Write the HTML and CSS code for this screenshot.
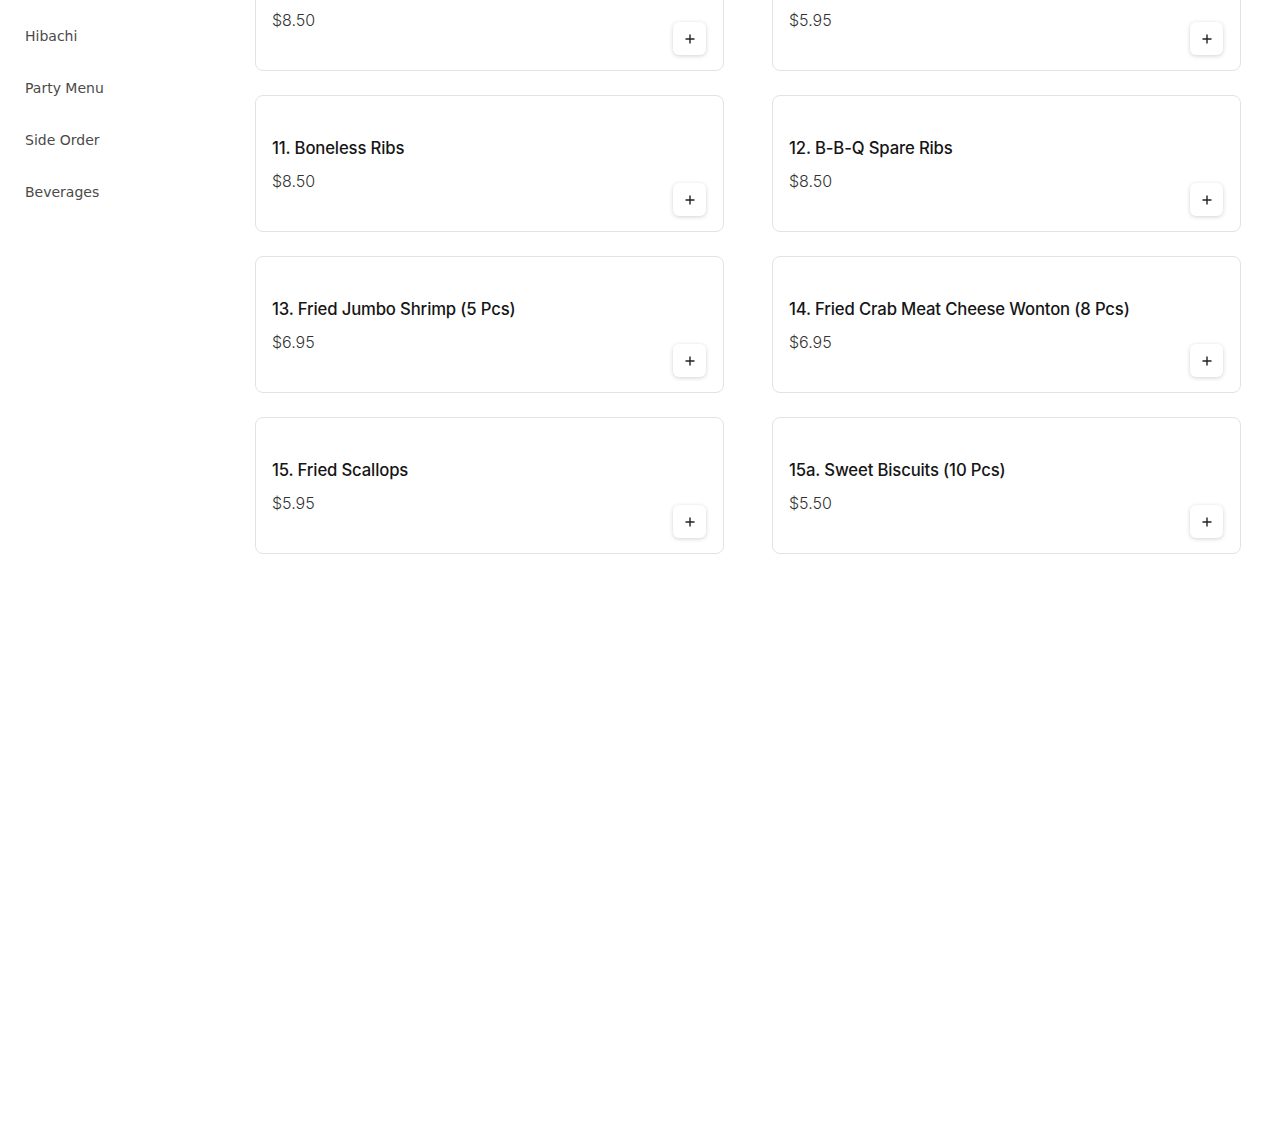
FILE: index.html
```html
<!DOCTYPE html>
<html lang="en">
<head>
  <meta charset="UTF-8" />
  <meta name="viewport" content="width=device-width, initial-scale=1.0" />
  <title>Menu</title>
  <link rel="stylesheet" href="styles.css">
</head>
<body>
  <div class="page">
    <nav class="categories">
      <a class="cat-link" href="#">Hibachi</a>
      <a class="cat-link" href="#">Party Menu</a>
      <a class="cat-link" href="#">Side Order</a>
      <a class="cat-link" href="#">Beverages</a>
    </nav>
    <main class="menu-list">
      <div class="menu-item">
        <div class="item-info">
          <div class="item-name">9. Chicken Wings (6 Pcs)</div>
          <div class="item-price">$8.50</div>
        </div>
        <button class="add-btn"><svg viewBox="0 0 12 12" width="12" height="12"><path d="M6 1.5v9M1.5 6h9" stroke="#222" stroke-width="1.4" fill="none"/></svg></button>
      </div>
      <div class="menu-item">
        <div class="item-info">
          <div class="item-name">10. Chicken Nuggets (10 Pcs)</div>
          <div class="item-price">$5.95</div>
        </div>
        <button class="add-btn"><svg viewBox="0 0 12 12" width="12" height="12"><path d="M6 1.5v9M1.5 6h9" stroke="#222" stroke-width="1.4" fill="none"/></svg></button>
      </div>
      <div class="menu-item">
        <div class="item-info">
          <div class="item-name">11. Boneless Ribs</div>
          <div class="item-price">$8.50</div>
        </div>
        <button class="add-btn"><svg viewBox="0 0 12 12" width="12" height="12"><path d="M6 1.5v9M1.5 6h9" stroke="#222" stroke-width="1.4" fill="none"/></svg></button>
      </div>
      <div class="menu-item">
        <div class="item-info">
          <div class="item-name">12. B-B-Q Spare Ribs</div>
          <div class="item-price">$8.50</div>
        </div>
        <button class="add-btn"><svg viewBox="0 0 12 12" width="12" height="12"><path d="M6 1.5v9M1.5 6h9" stroke="#222" stroke-width="1.4" fill="none"/></svg></button>
      </div>
      <div class="menu-item">
        <div class="item-info">
          <div class="item-name">13. Fried Jumbo Shrimp (5 Pcs)</div>
          <div class="item-price">$6.95</div>
        </div>
        <button class="add-btn"><svg viewBox="0 0 12 12" width="12" height="12"><path d="M6 1.5v9M1.5 6h9" stroke="#222" stroke-width="1.4" fill="none"/></svg></button>
      </div>
      <div class="menu-item">
        <div class="item-info">
          <div class="item-name">14. Fried Crab Meat Cheese Wonton (8 Pcs)</div>
          <div class="item-price">$6.95</div>
        </div>
        <button class="add-btn"><svg viewBox="0 0 12 12" width="12" height="12"><path d="M6 1.5v9M1.5 6h9" stroke="#222" stroke-width="1.4" fill="none"/></svg></button>
      </div>
      <div class="menu-item">
        <div class="item-info">
          <div class="item-name">15. Fried Scallops</div>
          <div class="item-price">$5.95</div>
        </div>
        <button class="add-btn"><svg viewBox="0 0 12 12" width="12" height="12"><path d="M6 1.5v9M1.5 6h9" stroke="#222" stroke-width="1.4" fill="none"/></svg></button>
      </div>
      <div class="menu-item">
        <div class="item-info">
          <div class="item-name">15a. Sweet Biscuits (10 Pcs)</div>
          <div class="item-price">$5.50</div>
        </div>
        <button class="add-btn"><svg viewBox="0 0 12 12" width="12" height="12"><path d="M6 1.5v9M1.5 6h9" stroke="#222" stroke-width="1.4" fill="none"/></svg></button>
      </div>
    </main>
  </div>
</body>
</html>
```

FILE: styles.css
```css
* { box-sizing: border-box; margin: 0; padding: 0; }
body
{
  background: #fff;
  font-family: "DejaVu Sans", sans-serif;
  color: #222;
}
.page
{
  display: flex;
  align-items: flex-start;
  padding-right: 29px;
}
.categories
{
  width: 255px;
  flex-shrink: 0;
  display: flex;
  flex-direction: column;
  padding-top: 10px;
}
.cat-link
{
  display: block;
  padding: 16px 25px;
  font-size: 14px;
  line-height: 20px;
  color: #4a4a4a;
  text-decoration: none;
}
/* page is scrolled, first row sits partly above the fold */
.menu-list
{
  flex: 1;
  margin-top: -66px;
  display: grid;
  grid-template-columns: 1fr 1fr;
  column-gap: 48px;
  row-gap: 24px;
}
.menu-item
{
  display: flex;
  justify-content: space-between;
  align-items: flex-end;
  height: 137px;
  padding: 16px 17px 15px 16px;
  border: 1px solid #e3e3e3;
  border-radius: 8px;
  background: #fff;
}
.item-info
{
  align-self: center;
}
.item-name
{
  font-family: Inter, sans-serif;
  font-size: 16.7px;
  font-weight: 470;
  letter-spacing: -0.15px;
  line-height: 24px;
  color: #161616;
  margin-bottom: 10px;
  position: relative;
  top: 1px;
}
.item-price
{
  font-family: Inter, sans-serif;
  font-size: 16px;
  font-weight: 300;
  line-height: 24px;
  color: #333;
}
.add-btn
{
  width: 33px;
  height: 33px;
  border: none;
  border-radius: 6px;
  background: #fff;
  box-shadow: 0 1px 4px rgba(0,0,0,0.18);
  display: flex;
  align-items: center;
  justify-content: center;
  cursor: pointer;
}
.add-btn svg { display: block; }
```
